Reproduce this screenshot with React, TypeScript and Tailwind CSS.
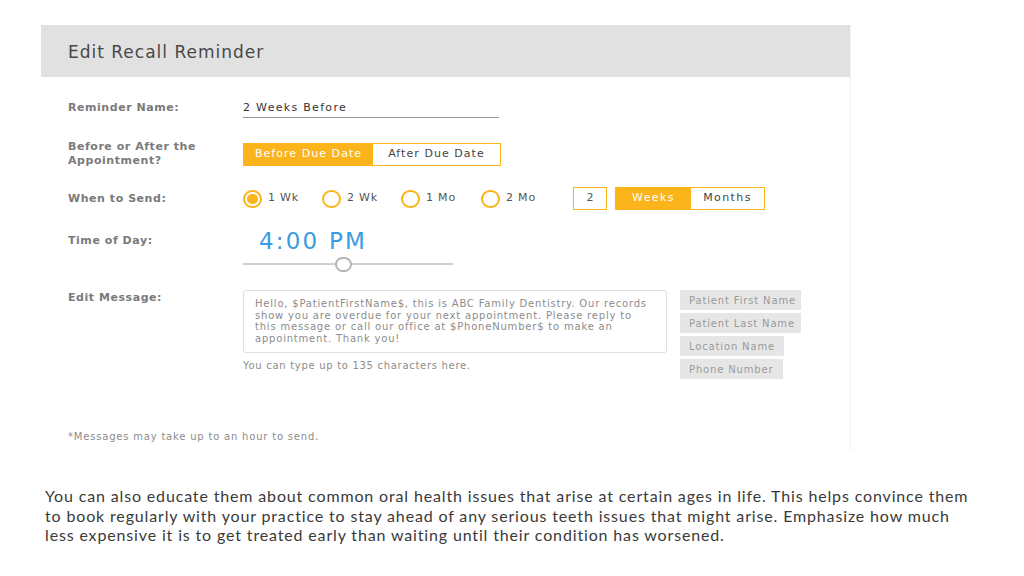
import type { ReactNode } from 'react'

const font = { fontFamily: '"DejaVu Sans", "Liberation Sans", sans-serif' }

function Label({ children }: { children: ReactNode }) {
  return (
    <div className="w-[175px] shrink-0 text-[11px] leading-[14px] font-bold tracking-[0.55px] text-[#7a7a7a]">
      {children}
    </div>
  )
}

function Radio({ label, checked }: { label: string; checked?: boolean }) {
  return (
    <div className="flex items-center gap-[6px]">
      <span className="flex h-[18px] w-[19px] items-center justify-center rounded-full border-2 border-[#fbb41a]">
        {checked && <span className="h-[10px] w-[11px] rounded-full bg-[#fbb41a]" />}
      </span>
      <span className="text-[11px] tracking-[0.8px] text-[#555]">{label}</span>
    </div>
  )
}

const tags = [
  { name: 'Patient First Name', w: 'w-[121px]' },
  { name: 'Patient Last Name', w: 'w-[121px]' },
  { name: 'Location Name', w: 'w-[104px]' },
  { name: 'Phone Number', w: 'w-[103px]' },
]

export default function App() {
  return (
    <div className="min-h-[576px] w-[1024px] bg-white pl-[41px] pt-[25px]">
      {/* Form card */}
      <div className="w-[810px] border-r border-[#f2f2f2]" style={font}>
        <div className="flex h-[52px] items-center bg-[#e1e1e1] pl-[27px] pt-[3px]">
          <h1 className="text-[17px] tracking-[1px] text-[#484848]">Edit Recall Reminder</h1>
        </div>

        <div className="flex flex-col pb-[8px] pl-[27px] pt-[20px]">
          {/* Reminder name */}
          <div className="flex h-[22px] items-center">
            <Label>Reminder Name:</Label>
            <div className="flex h-[20px] w-[256px] items-center border-b border-[#999] pt-[1px] text-[11px] tracking-[1.3px] text-[#333]">
              2 Weeks Before
            </div>
          </div>

          {/* Before / after */}
          <div className="mt-[21px] flex h-[28px] items-center">
            <Label>
              Before or After the
              <br />
              Appointment?
            </Label>
            <div className="flex h-[23px] border border-[#fbb41a] text-[11px] tracking-[1.05px]">
              <div className="flex w-[129px] items-center justify-center bg-[#fbb41a] text-white">Before Due Date</div>
              <div className="flex w-[127px] items-center justify-center bg-white text-[#444]">After Due Date</div>
            </div>
          </div>

          {/* When to send */}
          <div className="mt-[19px] flex h-[23px] items-center">
            <Label>When to Send:</Label>
            <div className="flex items-center">
              <div className="flex w-[79px]"><Radio label="1 Wk" checked /></div>
              <div className="flex w-[79px]"><Radio label="2 Wk" /></div>
              <div className="flex w-[80px]"><Radio label="1 Mo" /></div>
              <div className="flex w-[92px]"><Radio label="2 Mo" /></div>
              <div className="flex h-[23px] w-[34px] items-center justify-center border border-[#fbb41a] text-[11px] text-[#555]">2</div>
              <div className="ml-[8px] flex h-[23px] border border-[#fbb41a] text-[11px] tracking-[1.4px]">
                <div className="flex w-[75px] items-center justify-center bg-[#fbb41a] text-white">Weeks</div>
                <div className="flex w-[73px] items-center justify-center bg-white text-[#444]">Months</div>
              </div>
            </div>
          </div>

          {/* Time of day */}
          <div className="mt-[19px] flex">
            <div className="pt-[5px]">
              <Label>Time of Day:</Label>
            </div>
            <div className="flex w-[210px] flex-col">
              <div className="pl-[16px] text-[23px] leading-[24px] tracking-[2.2px] text-[#3b9be2]">4:00 PM</div>
              <div className="mt-[3px] flex h-[16px] items-center">
                <div className="h-[2px] w-[92px] bg-[#cfcfcf]" />
                <div className="h-[15px] w-[17px] shrink-0 rounded-full border-2 border-[#b5b5b5] bg-white" />
                <div className="h-[2px] flex-1 bg-[#cfcfcf]" />
              </div>
            </div>
          </div>

          {/* Message */}
          <div className="mt-[18px] flex">
            <div className="pt-[1px]">
              <Label>Edit Message:</Label>
            </div>
            <div className="flex flex-col">
              <div className="h-[63px] w-[424px] rounded-[3px] border border-[#dedede] px-[11px] pt-[7px] text-[10px] leading-[11.7px] tracking-[0.8px] text-[#8c8c8c]">
                Hello, $PatientFirstName$, this is ABC Family Dentistry. Our records show you are overdue for your next appointment. Please reply to this message or call our office at $PhoneNumber$ to make an appointment. Thank you!
              </div>
              <div className="mt-[7px] text-[10px] leading-[12px] tracking-[0.7px] text-[#8c8c8c]">
                You can type up to 135 characters here.
              </div>
            </div>
            <div className="ml-[13px] flex flex-col gap-[3px]">
              {tags.map((t) => (
                <div
                  key={t.name}
                  className={`flex h-[20px] items-center bg-[#e6e6e6] pl-[9px] text-[10px] tracking-[0.85px] text-[#9a9a9a] ${t.w}`}
                >
                  {t.name}
                </div>
              ))}
            </div>
          </div>

          <div className="mt-[52px] text-[10px] leading-[12px] tracking-[0.8px] text-[#8c8c8c]">
            *Messages may take up to an hour to send.
          </div>
        </div>
      </div>

      {/* Slide caption */}
      <p
        className="mt-[35px] w-[935px] pl-[4px] text-[16px] leading-[19.5px] tracking-[0.85px] text-[#3a3a3a]"
        style={{ fontFamily: 'Lato, "Open Sans", sans-serif' }}
      >
        You can also educate them about common oral health issues that arise at certain ages in life. This helps convince them to book regularly with your practice to stay ahead of any serious teeth issues that might arise. Emphasize how much less expensive it is to get treated early than waiting until their condition has worsened.
      </p>
    </div>
  )
}
